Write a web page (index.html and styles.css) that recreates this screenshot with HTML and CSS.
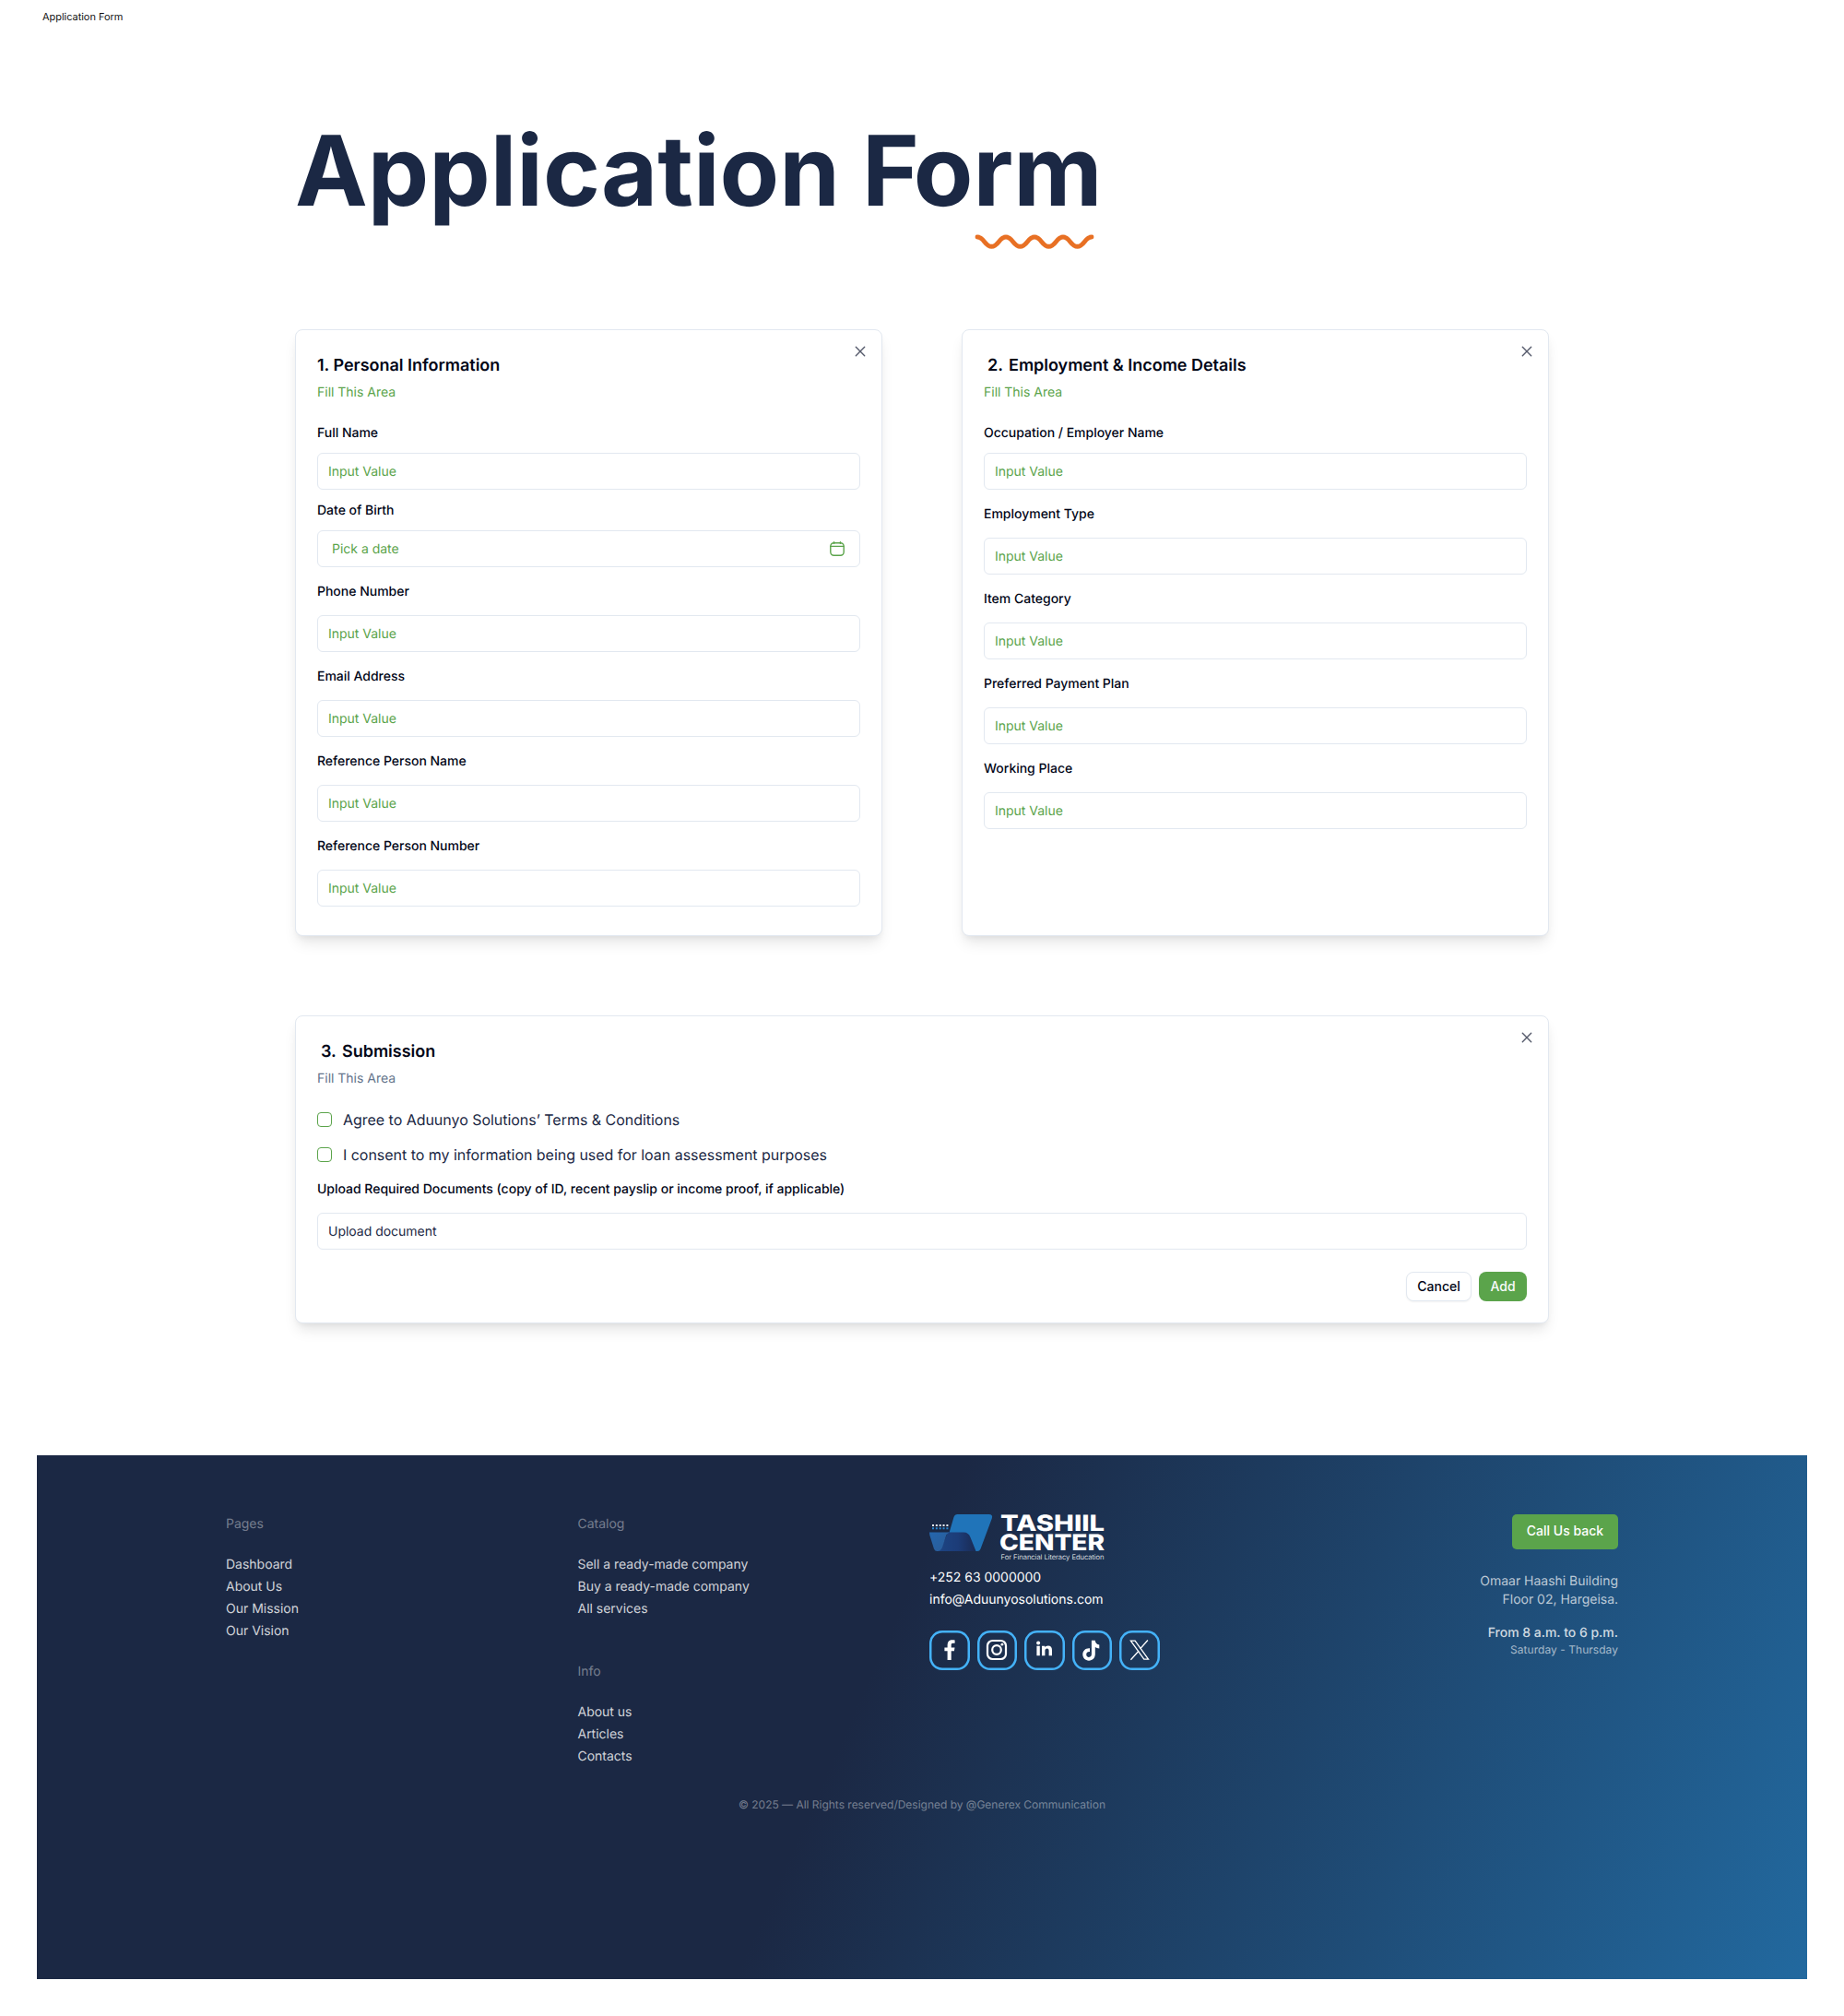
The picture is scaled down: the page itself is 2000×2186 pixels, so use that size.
FILE: index.html
```html
<!DOCTYPE html>
<html lang="en">
<head>
<meta charset="utf-8">
<title>Application Form</title>
<link rel="stylesheet" href="styles.css">
</head>
<body>
<div class="frame-name">Application Form</div>
<main class="main">
  <div class="heading">
    <h1 class="title">Application <span class="kern">F</span>orm</h1>
    <svg class="squiggle" width="130" height="18" viewBox="0 0 130 18" fill="none" stroke="#e87024" stroke-width="4.9" stroke-linecap="round"><path d="M3 4C10.500 4 11 14.300 18.500 14.300S26.500 4 34 4S42 14.300 49.500 14.300S57.500 4 65 4S73 14.300 80.500 14.300S88.500 4 96 4S104 14.300 111.500 14.300S119.500 4 127 4"/></svg>
  </div>

  <div class="cards">
    <section class="card card-personal">
      <svg class="close" width="16" height="16" viewBox="0 0 16 16"><path d="M3.300 3.300l9.400 9.400M12.700 3.300l-9.400 9.400"/></svg>
      <h2 class="card-title">1. Personal Information</h2>
      <p class="card-desc">Fill This Area</p>
      <div class="field tight"><label>Full Name</label><div class="input">Input Value</div></div>
      <div class="field tight"><label>Date of Birth</label><div class="input date"><span>Pick a date</span>
        <svg width="16" height="16" viewBox="0 0 16 16" fill="none" stroke="#5ba44b" stroke-width="1.400" stroke-linecap="round"><rect x=".8" y="1.700" width="14.400" height="13.500" rx="3.600"/><path d="M.8 5.400h14.400M4.600.8v1.500M11.400.8v1.500"/></svg></div></div>
      <div class="field"><label>Phone Number</label><div class="input">Input Value</div></div>
      <div class="field"><label>Email Address</label><div class="input">Input Value</div></div>
      <div class="field"><label>Reference Person Name</label><div class="input">Input Value</div></div>
      <div class="field"><label>Reference Person Number</label><div class="input">Input Value</div></div>
    </section>

    <section class="card">
      <svg class="close" width="16" height="16" viewBox="0 0 16 16"><path d="M3.300 3.300l9.400 9.400M12.700 3.300l-9.400 9.400"/></svg>
      <h2 class="card-title"><span class="num">2.</span>Employment &amp; Income Details</h2>
      <p class="card-desc">Fill This Area</p>
      <div class="field tight"><label>Occupation / Employer Name</label><div class="input">Input Value</div></div>
      <div class="field"><label>Employment Type</label><div class="input">Input Value</div></div>
      <div class="field"><label>Item Category</label><div class="input">Input Value</div></div>
      <div class="field"><label>Preferred Payment Plan</label><div class="input">Input Value</div></div>
      <div class="field"><label>Working Place</label><div class="input">Input Value</div></div>
    </section>

    <section class="card card-submit">
      <svg class="close" width="16" height="16" viewBox="0 0 16 16"><path d="M3.300 3.300l9.400 9.400M12.700 3.300l-9.400 9.400"/></svg>
      <h2 class="card-title"><span class="num">3.</span>Submission</h2>
      <p class="card-desc muted">Fill This Area</p>
      <div class="checks">
        <div class="check"><span class="box"></span>Agree to Aduunyo Solutions’ Terms &amp; Conditions</div>
        <div class="check"><span class="box"></span>I consent to my information being used for loan assessment purposes</div>
      </div>
      <div class="field upload"><label>Upload Required Documents (copy of ID, recent payslip or income proof, if applicable)</label><div class="input file">Upload document</div></div>
      <div class="actions"><button class="btn cancel">Cancel</button><button class="btn add">Add</button></div>
    </section>
  </div>
</main>

<footer class="footer">
  <div class="columns">
    <nav>
      <h3>Pages</h3>
      <ul><li>Dashboard</li><li>About Us</li><li>Our Mission</li><li>Our Vision</li></ul>
    </nav>
    <div class="stack">
      <nav>
        <h3>Catalog</h3>
        <ul><li>Sell a ready-made company</li><li>Buy a ready-made company</li><li>All services</li></ul>
      </nav>
      <nav>
        <h3>Info</h3>
        <ul><li>About us</li><li>Articles</li><li>Contacts</li></ul>
      </nav>
    </div>
    <div class="contact">
      <svg class="logo" width="192" height="50" viewBox="0 0 192 50">
        <defs>
          <linearGradient id="pocket" x1="0" x2="1"><stop offset="0" stop-color="#1d4584"/><stop offset=".55" stop-color="#1c3c78"/><stop offset="1" stop-color="#1a2a52"/></linearGradient>
          <linearGradient id="fold" x1="0" x2="1" y1="0" y2="1"><stop offset="0" stop-color="#2466ad"/><stop offset="1" stop-color="#2b5b96"/></linearGradient>
        </defs>
        <path d="M30.500 0H64.500Q69.300 0 67.800 4.500L55.500 37.500Q54.500 40 52 40H49Q47 40 46 37.500L40 20H21.500L26.500 3Q27.500 0 30.500 0Z" fill="#2074b9"/>
        <path d="M20 19.500H37Q42.500 19.500 44.500 25L50.500 40H7Q12 39 13.500 35Z" fill="url(#pocket)"/>
        <path d="M0 19.500H21.500Q18.500 21 17.500 25L14 36Q12 40 8.500 40Q6 40 5 37.500L.3 22.500Z" fill="url(#fold)"/>
        <g fill="none" stroke-width="2" stroke-dasharray="2 1.850"><path d="M3 12h17.500" stroke="#e8eef7"/><path d="M3 15.200h17.500" stroke="#2a86cf"/></g>
        <g class="logo-name"><text x="77" y="17.600" textLength="113" lengthAdjust="spacingAndGlyphs">TASHIIL</text><text x="76" y="39" textLength="114" lengthAdjust="spacingAndGlyphs">CENTER</text></g>
        <text class="logo-tag" x="77.500" y="48.500" textLength="112" lengthAdjust="spacingAndGlyphs">For Financial Literacy Education</text>
      </svg>
      <p>+252 63 0000000</p>
      <p>info@Aduunyosolutions.com</p>
      <div class="social">
        <span><svg viewBox="0 0 24 24"><path fill="#fff" d="M9.600 23V13.200H6.400V9.500h3.200V6.400C9.600 3 11.600 1.200 14.600 1.200c1.200 0 2.300.1 3 .2v3.400h-1.900c-1.600 0-2 .8-2 1.900v2.800h3.800l-.6 3.700h-3.200V23z"/></svg></span>
        <span><svg viewBox="0 0 24 24"><g fill="none" stroke="#fff" stroke-width="2.200"><rect x="2" y="2" width="20" height="20" rx="5.600"/><circle cx="12" cy="12" r="4.800"/></g><circle cx="17.900" cy="6.200" r="1.400" fill="#fff"/></svg></span>
        <span><svg viewBox="0 0 24 24"><g fill="#fff"><circle cx="5.100" cy="4.400" r="2"/><path d="M3.400 7.700h3.400V18.300H3.400zM9 7.700h3.300v1.500c.6-1.100 1.800-1.800 3.400-1.800 3 0 4.300 1.700 4.300 4.900v6h-3.400v-5.400c0-1.600-.5-2.500-1.900-2.500-1.500 0-2.300 1-2.300 2.600v5.300H9z"/></g></svg></span>
        <span><svg viewBox="0 0 24 24"><path fill="#fff" d="M11.900 1.800h3.800c.3 2.700 1.900 4.500 4.600 4.800v3.800c-1.700 0-3.200-.5-4.500-1.400v7.600c0 4.300-2.900 7.100-6.800 7.100-3.800 0-6.700-2.900-6.700-6.600 0-4.300 3.400-7.300 7.700-6.800v3.900c-2-.4-3.800.8-3.800 2.800 0 1.700 1.200 2.900 2.800 2.900 1.800 0 2.900-1.200 2.900-3.300z"/></svg></span>
        <span><svg viewBox="0 0 24 24"><g fill="none" stroke="#fff" stroke-width="1.300"><path d="M2.400 2.100h4.700l14.400 20h-4.700z"/><path d="M20.900 1.500l-8.200 9.200M11 13.200l-8.600 9.600"/></g></svg></span>
      </div>
    </div>
    <div class="office">
      <button class="call">Call Us back</button>
      <p class="address">Omaar Haashi Building<br>Floor 02, Hargeisa.</p>
      <p class="hours">From 8 a.m. to 6 p.m.</p>
      <p class="days">Saturday - Thursday</p>
    </div>
  </div>
  <p class="copyright">© 2025 — All Rights reserved/Designed by @Generex Communication</p>
</footer>
</body>
</html>
```
FILE: styles.css
```css
* { box-sizing: border-box; }
body, h1, h2, h3, p, ul { margin: 0; padding: 0; }
body {
  width: 2000px;
  height: 2186px;
  background: #fff;
  color: #020617;
  font: 14px/20px Inter, "Liberation Sans", sans-serif;
  letter-spacing: -.015px;
  text-rendering: geometricPrecision;
}
ul { list-style: none; }
button { font: inherit; font-weight: 500; padding: 0; }

.frame-name {
  height: 36px;
  padding-left: 46px;
  font-size: 11px;
  line-height: 36px;
  letter-spacing: -.04px;
  color: #111;
}
.main { width: 1360px; margin: 0 auto; }

.heading {
  height: 321px;
  padding-top: 84px;
  display: flex;
  flex-direction: column;
  align-items: flex-start;
}
.title {
  font-size: 105.500px;
  line-height: 131px;
  font-weight: 700;
  letter-spacing: 0;
  color: #1b2844;
  white-space: nowrap;
}
.kern { margin-left: -1px; letter-spacing: -6px; }
.squiggle { margin: 2px 0 0 737px; }

.cards {
  display: grid;
  grid-template-columns: 637px 637px;
  justify-content: space-between;
  row-gap: 86px;
}
.card {
  position: relative;
  height: 658px;
  padding: 25px 23px 0;
  border: 1px solid #e2e8f0;
  border-radius: 8px;
  background: #fff;
  box-shadow: 0 10px 15px -3px rgba(0, 0, 0, .1), 0 4px 6px -2px rgba(0, 0, 0, .05);
}
.card-submit { grid-column: 1 / -1; height: 334px; }
.close { position: absolute; top: 15px; right: 15px; fill: none; stroke: #555a6b; stroke-width: 1.4; stroke-linecap: round; }
.card-title { font-size: 18px; line-height: 28px; font-weight: 600; }
.num { display: inline-block; width: 27px; padding-left: 4px; }
.card-desc { margin: 5px 0 23px; color: #5ba44b; }
.card-desc.muted { margin-bottom: 22px; color: #64748b; }

.field { display: flex; flex-direction: column; gap: 16px; margin-top: 16px; font-weight: 500; }
.field.tight { gap: 12px; margin-top: 12px; }
.card-desc + .field.tight { margin-top: 0; }
.field label { height: 20px; padding-top: 1px; }
.input {
  height: 40px;
  padding: 0 11px;
  border: 1px solid #e2e8f0;
  border-radius: 6px;
  line-height: 40px;
  font-weight: 400;
  color: #5ba44b;
}
.input.date { padding: 0 16px 0 15px; display: flex; align-items: center; justify-content: space-between; }
.input.date span { height: 38px; }
.input.file { color: #1b2844; }

.checks { display: flex; flex-direction: column; gap: 14px; }
.check { display: flex; align-items: center; gap: 12px; height: 24px; font-size: 16px; letter-spacing: -.03px; color: #1b2844; }
.box { width: 16px; height: 16px; border: 1px solid #5ba44b; border-radius: 4px; }
.field.upload { margin-top: 15px; }
.actions { display: flex; justify-content: flex-end; gap: 8px; margin-top: 24px; }
.btn { height: 32px; border-radius: 8px; }
.cancel { width: 71px; border: 1px solid #e2e8f0; background: #fff; color: #020617; box-shadow: 0 1px 2px rgba(0, 0, 0, .05); }
.add { width: 52px; border: 0; background: #5ba44b; color: #f8fafc; }

.footer {
  width: 1920px;
  height: 568px;
  margin: 143px auto 0;
  padding: 64px 205px 0;
  background: linear-gradient(114deg, #1b2844 46.5%, #22699f 100%);
  color: #fff;
}
.columns { display: grid; grid-template-columns: repeat(4, 1fr); column-gap: 16px; height: 305px; }
.footer nav { padding-top: 1px; }
.footer h3 { font-size: 14px; line-height: 20px; font-weight: 400; color: rgba(255, 255, 255, .4); }
.footer ul { margin-top: 22px; color: rgba(255, 255, 255, .8); line-height: 24px; }
.stack { display: flex; flex-direction: column; gap: 45px; }
.contact p { line-height: 24px; }
.logo { display: block; margin-bottom: 7px; overflow: visible; }
.logo-name { font: 800 24px Inter, sans-serif; fill: #fff; }
.logo-tag { font: 300 7.600px Inter, sans-serif; fill: #fff; }
.social { display: flex; gap: 8px; margin-top: 20.500px; }
.social span { width: 43.500px; height: 43.500px; display: grid; place-items: center; border-radius: 14px; box-shadow: inset 0 0 0 2.500px #44b2f8; }
.social svg { width: 24px; height: 24px; }
.office { display: flex; flex-direction: column; align-items: flex-end; text-align: right; }
.call { width: 115px; height: 38px; padding-bottom: 2px; border: 0; border-radius: 5px; background: #5ba44b; color: #fff; }
.address { margin-top: 25px; color: rgba(255, 255, 255, .7); }
.hours { margin-top: 16px; font-weight: 500; color: rgba(255, 255, 255, .8); }
.days { font-size: 12px; line-height: 16px; letter-spacing: .04px; color: rgba(255, 255, 255, .6); }
.copyright { text-align: center; font-size: 12px; line-height: 20px; color: rgba(255, 255, 255, .4); }
```
